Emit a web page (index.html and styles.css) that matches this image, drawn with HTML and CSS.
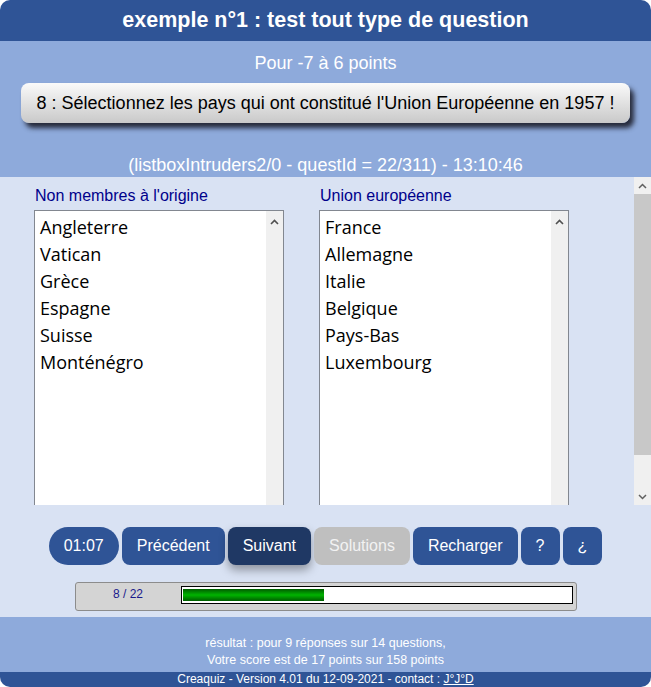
FILE: index.html
```html
<!DOCTYPE html>
<html lang="fr">
<head>
<meta charset="utf-8">
<title>Creaquiz</title>
<link rel="stylesheet" href="styles.css">
</head>
<body>
<div class="app">
  <header class="top">
    <h1 class="title">exemple n°1 : test tout type de question</h1>
  </header>
  <section class="info">
    <p class="points">Pour -7 à 6 points</p>
    <div class="question">8 : Sélectionnez les pays qui ont constitué l'Union Européenne en 1957 !</div>
    <p class="qid">(listboxIntruders2/0 - questId = 22/311) - 13:10:46</p>
  </section>
  <main class="main">
    <div class="scrollarea">
      <div class="lists">
        <div class="col">
          <div class="label">Non membres à l'origine</div>
          <div class="listbox">
            <ul class="items">
              <li>Angleterre</li>
              <li>Vatican</li>
              <li>Grèce</li>
              <li>Espagne</li>
              <li>Suisse</li>
              <li>Monténégro</li>
            </ul>
            <div class="lb-bar">
              <svg class="chev" width="9" height="6" viewBox="0 0 9 6"><polyline points="1,5 4.5,1.5 8,5" fill="none" stroke="#505050" stroke-width="1.6"/></svg>
            </div>
          </div>
        </div>
        <div class="col">
          <div class="label">Union européenne</div>
          <div class="listbox">
            <ul class="items">
              <li>France</li>
              <li>Allemagne</li>
              <li>Italie</li>
              <li>Belgique</li>
              <li>Pays-Bas</li>
              <li>Luxembourg</li>
            </ul>
            <div class="lb-bar">
              <svg class="chev" width="9" height="6" viewBox="0 0 9 6"><polyline points="1,5 4.5,1.5 8,5" fill="none" stroke="#505050" stroke-width="1.6"/></svg>
            </div>
          </div>
        </div>
      </div>
      <div class="vbar">
        <div class="vbtn"><svg width="9" height="6" viewBox="0 0 9 6"><polyline points="1,5 4.5,1.5 8,5" fill="none" stroke="#606060" stroke-width="1.5"/></svg></div>
        <div class="thumb"></div>
        <div class="track"></div>
        <div class="vbtn"><svg width="9" height="6" viewBox="0 0 9 6"><polyline points="1,1 4.5,4.5 8,1" fill="none" stroke="#606060" stroke-width="1.5"/></svg></div>
      </div>
    </div>
    <div class="buttons">
      <button class="btn timer">01:07</button>
      <button class="btn">Précédent</button>
      <button class="btn primary">Suivant</button>
      <button class="btn disabled">Solutions</button>
      <button class="btn">Recharger</button>
      <button class="btn">?</button>
      <button class="btn">¿</button>
    </div>
    <div class="progress">
      <span class="plabel">8 / 22</span>
      <div class="pbar"><div class="pfill" style="width:36.4%"></div></div>
    </div>
  </main>
  <footer class="result">
    <p>résultat : pour 9 réponses sur 14 questions,</p>
    <p>Votre score est de 17 points sur 158 points</p>
  </footer>
  <div class="credits">Creaquiz - Version 4.01 du 12-09-2021 - contact : <a href="#">J°J°D</a></div>
</div>
</body>
</html>
```
FILE: styles.css
```css
html, body {
  margin: 0;
  padding: 0;
  background: #ffffff;
}
body {
  font-family: "Liberation Sans", Arial, sans-serif;
}
.app {
  width: 651px;
  height: 687px;
  border-radius: 10px;
  overflow: hidden;
  display: flex;
  flex-direction: column;
}
.top {
  height: 41px;
  background: #2f5496;
  display: flex;
  align-items: center;
  justify-content: center;
}
.title {
  margin: 0;
  color: #ffffff;
  font-size: 21.5px;
  font-weight: bold;
  line-height: 41px;
}
.info {
  height: 136px;
  box-sizing: border-box;
  background: #8eaadb;
  padding: 12px 21px 0 21px;
  text-align: center;
  color: #ffffff;
}
.points {
  margin: 0;
  font-size: 18px;
  line-height: 20px;
}
.question {
  margin-top: 10px;
  height: 40px;
  line-height: 40px;
  border-radius: 8px;
  background: linear-gradient(to bottom, #fafafa, #c9c9c9);
  color: #000000;
  font-size: 18px;
  box-shadow: 4px 5px 5px rgba(20, 20, 30, 0.85);
}
.qid {
  margin: 32px 0 0 0;
  font-size: 18px;
  line-height: 20px;
}
.main {
  height: 440px;
  box-sizing: border-box;
  background: #d9e2f3;
  padding-bottom: 6px;
}
.scrollarea {
  height: 328px;
  display: flex;
  overflow: hidden;
}
.lists {
  flex: 1;
  display: flex;
  gap: 35px;
  padding: 10px 0 0 34px;
}
.col {
  width: 250px;
}
.label {
  color: #00008b;
  font-size: 16px;
  line-height: 18px;
  margin-bottom: 5px;
  padding-left: 1px;
}
.listbox {
  box-sizing: border-box;
  width: 250px;
  height: 300px;
  border: 1px solid #828790;
  background: #ffffff;
  display: flex;
}
.items {
  flex: 1;
  margin: 0;
  padding: 3px 0 0 5px;
  list-style: none;
  font-family: "Open Sans", "Noto Sans", sans-serif;
  font-size: 18px;
  line-height: 27px;
  color: #000000;
}
.lb-bar {
  width: 17px;
  background: #f0f0f0;
  display: flex;
  justify-content: center;
  padding-top: 8px;
}
.chev {
  display: block;
}
.vbar {
  width: 17px;
  display: flex;
  flex-direction: column;
  background: #f0f0f0;
}
.vbtn {
  height: 17px;
  display: flex;
  align-items: center;
  justify-content: center;
  background: #f0f0f0;
}
.thumb {
  height: 261px;
  background: #c8c8c8;
}
.track {
  flex: 1;
  background: #f0f0f0;
}
.buttons {
  margin-top: 22px;
  display: flex;
  justify-content: center;
  gap: 3px;
}
.btn {
  height: 38px;
  padding: 0 15px;
  border: none;
  border-radius: 8px;
  background: #2f5496;
  color: #ffffff;
  font-family: "Liberation Sans", Arial, sans-serif;
  font-size: 16px;
}
.timer {
  border-radius: 19px;
}
.primary {
  background: #1f3864;
  box-shadow: 0 5px 10px rgba(0, 0, 0, 0.35);
}
.disabled {
  background: #bfbfbf;
  color: #f2f2f2;
}
.progress {
  box-sizing: border-box;
  width: 502px;
  height: 29px;
  margin: 17px auto 0 auto;
  padding: 3px 3px 0 0;
  border: 1px solid #8c8c8c;
  border-radius: 3px;
  background: #d4d4d4;
  display: flex;
  align-items: flex-start;
}
.plabel {
  width: 105px;
  text-align: center;
  color: #1a1a8c;
  font-size: 12px;
  line-height: 16px;
}
.pbar {
  flex: 1;
  height: 18px;
  box-sizing: border-box;
  border: 1px solid #000000;
  background: #ffffff;
  padding: 2px 1px;
}
.pfill {
  height: 100%;
  background: linear-gradient(to bottom, #005c00, #00b400 50%, #005c00);
}
.result {
  height: 55px;
  box-sizing: border-box;
  background: #8eaadb;
  padding-top: 18px;
  text-align: center;
  color: #ffffff;
  font-size: 12.5px;
  line-height: 17px;
}
.result p {
  margin: 0;
}
.credits {
  height: 15px;
  background: #2f5496;
  color: #ffffff;
  text-align: center;
  font-size: 12px;
  line-height: 15px;
}
.credits a {
  color: #ffffff;
}
```
